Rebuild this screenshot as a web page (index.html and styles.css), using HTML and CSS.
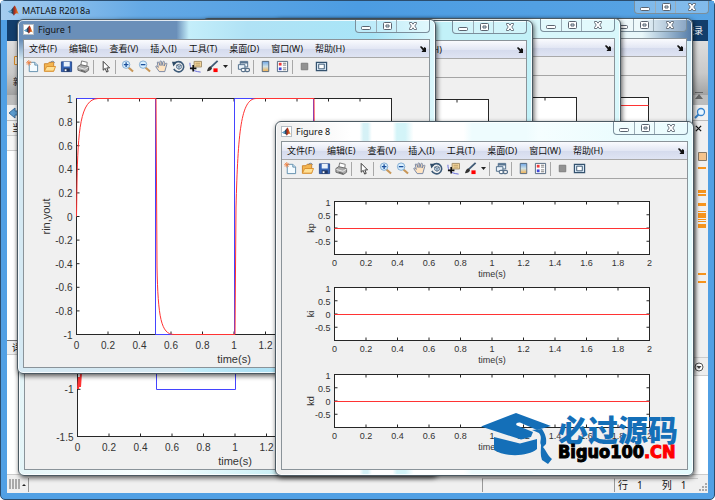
FILE: index.html
```html
<!DOCTYPE html>
<html lang="zh-CN">
<head>
<meta charset="utf-8">
<title>MATLAB R2018a</title>
<link rel="stylesheet" href="styles.css">
</head>
<body>
<svg class="defs" aria-hidden="true">
  <defs>
    <linearGradient id="flame" x1="0" x2="1"><stop offset="0" stop-color="#5aa9d6"/><stop offset=".4" stop-color="#23455e"/><stop offset=".6" stop-color="#b5301c"/><stop offset="1" stop-color="#f3a12b"/></linearGradient>
    <linearGradient id="cbar" x1="0" y1="0" x2="0" y2="1"><stop offset="0" stop-color="#6ea6e8"/><stop offset=".5" stop-color="#cfe0e4"/><stop offset="1" stop-color="#f5b04a"/></linearGradient>
    <symbol id="i-matlab" viewBox="0 0 12 12"><path fill="url(#flame)" d="M0 7.2 3 5.6 7.2.6C8.600 1.200 10.200 7 12 10.400 9.800 8.300 8.400 8.800 6.500 11.600 5.200 9.600 4.300 9 3.200 9Z"/><path fill="#5d9fc9" d="M0 7.200 3 5.600 4.400 6.800 3 8.900Z"/></symbol>
    <symbol id="i-new" viewBox="0 0 14 14"><path d="M3.500 2.500h6l3 3v7h-9z" fill="#f4fbff" stroke="#5f8cab"/><path d="M9.500 2.500v3h3" fill="#cde4f4" stroke="#5f8cab"/><path d="M3 0v6M0 3h6M1 1l4 4M5 1 1 5" stroke="#ee8140" stroke-width=".9"/></symbol>
    <symbol id="i-open" viewBox="0 0 14 14"><path d="M1.500 12V4h4l1-1.500h5V12z" fill="#f3b550" stroke="#cc842b"/><path d="M1.500 12 4 7h9.500L11.500 12z" fill="#ffe094" stroke="#d9902f"/><path d="M8 2.500c2-2 4-1 4.500.5" fill="none" stroke="#65758a"/></symbol>
    <symbol id="i-save" viewBox="0 0 14 14"><path d="M1.500 2h11v10.500h-11z" fill="#3564b5" stroke="#284a8b"/><path d="M4 2h6.500v5H4z" fill="#eaf2fb"/><path d="M4 9h6.500v3.500H4z" fill="#22365f"/><path d="M5 10h2v2H5z" fill="#fff"/></symbol>
    <symbol id="i-print" viewBox="0 0 14 14"><path d="m4 6 1-5 6 1.500L10.500 7z" fill="#fff" stroke="#777"/><path d="m1 7 3-2 8.500 2v4L9 13.500 1 11z" fill="#aaa" stroke="#666"/><path d="m1.500 8 7 2 4-2.500" fill="none" stroke="#eee"/><path d="m4 11 5 1.500" stroke="#555"/></symbol>
    <symbol id="i-arrow" viewBox="0 0 14 14"><path d="M4.500 1.500v9.500L6.700 9l1.500 4 1.700-.7-1.500-3.800h3z" fill="#fff" stroke="#333"/></symbol>
    <symbol id="i-zoomin" viewBox="0 0 14 14"><path d="m8 8 5 4.500" stroke="#c89758" stroke-width="2.200"/><circle cx="5.500" cy="5" r="4" fill="#d8efff" stroke="#7ea9ce"/><path d="M5.500 2.500v5M3 5h5" stroke="#1b4f9b" stroke-width="1.400"/></symbol>
    <symbol id="i-zoomout" viewBox="0 0 14 14"><path d="m8 8 5 4.500" stroke="#c89758" stroke-width="2.200"/><circle cx="5.500" cy="5" r="4" fill="#d8efff" stroke="#7ea9ce"/><path d="M3 5h5" stroke="#1b4f9b" stroke-width="1.400"/></symbol>
    <symbol id="i-pan" viewBox="0 0 14 14"><path d="M4.500 12.500 1 7.500c-.5-1.500 1-1.500 2.500.5L2.500 3c0-1.500 1.300-1.500 1.700 0L5.500 6 5.300 2c.2-1.500 1.700-1.300 1.800 0L7.500 6l1-4c.5-1.200 1.800-.8 1.600.5L9.700 6.500l1.500-2.700c.8-1 1.900-.3 1.500.8L10.500 12.500z" fill="#ffe4c2" stroke="#64779a" stroke-width=".9"/></symbol>
    <symbol id="i-rotate" viewBox="0 0 14 14"><path d="M3 3.500A5.500 5.500 0 1 1 2 9.500" fill="none" stroke="#3c5a78" stroke-width="1.700"/><path d="M0 2h5.500L1.500 7z" fill="#304c68"/><path d="m5 5.500 3-1 2 1.200v3L7.500 10 5 8.500zM5 5.500l2.500 1.200L10 5.700M7.500 6.700V10" fill="#c9dced" stroke="#49627c" stroke-width=".8"/></symbol>
    <symbol id="i-cursor" viewBox="0 0 14 14"><path d="M5.500 1.500h8v6h-8z" fill="#f6d79e" stroke="#9f8a66"/><path d="M7 3.500h5M7 5.500h5" stroke="#b79a66"/><path d="M1 3c0 6 2 9 11.500 10" fill="none" stroke="#5960d8"/><path d="M4.500 5.500v7M1 9h7" stroke="#111" stroke-width="1.700"/></symbol>
    <symbol id="i-brush" viewBox="0 0 14 14"><path d="m5 8 7.500-7" stroke="#405b76" stroke-width="2"/><path d="M1 12c1.500-4 2-5 4-5l1.500 1.800C6 11 3.500 12 1 12z" fill="#333"/><path d="M8 9h4.500v4H8z" fill="#f00"/></symbol>
    <symbol id="i-link" viewBox="0 0 14 14"><path d="M3.500 1.500h8v6h-8z" fill="#eaf2f9" stroke="#4b6987"/><path d="M3.500 3h8" stroke="#4b6987" stroke-width="1.500"/><path d="M1.500 5h7v5h-7z" fill="#eaf2f9" stroke="#4b6987"/><rect x="4.500" y="9" width="5" height="3.500" rx="1.700" fill="#fff" stroke="#59728b" stroke-width="1.200"/><rect x="8.500" y="9" width="5" height="3.500" rx="1.700" fill="none" stroke="#59728b" stroke-width="1.200"/></symbol>
    <symbol id="i-colorbar" viewBox="0 0 14 14"><path d="M3.500 1.500h7v11h-7z" fill="url(#cbar)" stroke="#4f657c"/></symbol>
    <symbol id="i-legend" viewBox="0 0 14 14"><path d="M1.500 1.500h11v11h-11z" fill="#fff" stroke="#4f657c"/><path d="M3 3h3v3H3z" fill="#ef3a3a"/><path d="M3 8h3v3H3z" fill="#4048d8"/><path d="M7.500 3.500H11M7.500 5.500H11M7.500 8.500H11M7.500 10.500H11" stroke="#777"/></symbol>
    <symbol id="i-hide" viewBox="0 0 14 14"><path d="M3.500 3.500h7v7h-7z" fill="#929292" stroke="#7b7b7b"/></symbol>
    <symbol id="i-dock" viewBox="0 0 14 14"><path d="M1.500 2.500h11v9h-11z" fill="#d8e7f5" stroke="#35536f" stroke-width="1.300"/><path d="M4 4.500h6v5H4z" fill="#fff" stroke="#35536f"/></symbol>
    <symbol id="i-min" viewBox="0 0 12 10"><rect x="1.500" y="5.500" width="9" height="3" rx="1" fill="#fff" stroke="#5b6470"/></symbol>
    <symbol id="i-max" viewBox="0 0 12 10"><rect x="2.500" y="1.500" width="8" height="7" rx="1" fill="#fff" stroke="#5b6470"/><path d="M5 4h3v2H5z" fill="#d9edf5" stroke="#5b6470"/></symbol>
    <symbol id="i-close" viewBox="0 0 12 10"><path d="M2.500 1.500h2.300L6 3.200l1.200-1.700h2.300v1L7.800 5l1.700 2.500v1H7.200L6 6.800 4.800 8.500H2.500v-1L4.200 5 2.500 2.500z" fill="#fff" stroke="#5b6470" stroke-width=".9"/></symbol>
  </defs>
</svg>

<main class="shell">
  <header class="shell-title">
    <svg class="app-icon"><use href="#i-matlab"/></svg>
    <h1>MATLAB R2018a</h1>
    <div class="controls shell-controls">
      <button type="button" aria-label="最小化"><svg><use href="#i-min"/></svg></button><button type="button" aria-label="最大化"><svg><use href="#i-max"/></svg></button><button type="button" aria-label="关闭"><svg><use href="#i-close"/></svg></button>
    </div>
  </header>
  <div class="tabs"><a href="#login">登录</a></div>
  <div class="strip">
    <button type="button" class="strip-new"><svg viewBox="0 0 12 12"><path d="M1.500 1.500h9v8h-9z" fill="#f2e6d0" stroke="#d58a27"/></svg><span>新建</span></button>
    <svg class="collapse" viewBox="0 0 10 10"><path d="M1 1.500h8" stroke="#666"/><path d="M5 3 9 8H1z" fill="#666"/></svg>
  </div>
  <div class="address">
    <svg viewBox="0 0 12 12"><path d="M1 6 7 1v3h5v4H7v3z" fill="#5c9ccf" stroke="#386c9c"/></svg>
    <svg viewBox="0 0 12 12"><circle cx="7" cy="5" r="3.500" fill="#e8f6ff" stroke="#3683cd" stroke-width="1.300"/><path d="M4.500 7.500 1 11" stroke="#3683cd" stroke-width="2"/></svg>
  </div>
  <div class="panes">
    <section class="pane-left">
      <h2 class="pane-head">当前文件夹</h2>
      <div class="pane-sub"></div>
      <div class="pane-body"></div>
      <h2 class="pane-head detail-head">详细信息</h2>
      <div class="pane-body detail-body"></div>
    </section>
    <section class="pane-right">
      <div class="pane-head close-head"><button type="button" aria-label="关闭窗格"><svg viewBox="0 0 8 8"><path d="m1 1 6 6M7 1 1 7" stroke="#111" stroke-width="1.400"/></svg></button></div>
      <svg class="marks" viewBox="0 0 10 217" aria-hidden="true">
        <path d="M.5 12.500h8v8h-8z" fill="#f6c48c" stroke="#8a7a66"/>
        <path d="M0 27h8v2H0zM0 50h8v3H0zM0 54h8v2H0zM0 63h8v3H0zM0 71h8v1H0zM0 73h8v5H0zM0 79h8v1H0zM0 81h8v1H0zM0 84h8v4H0zM0 133h8v2H0zM0 141h8v2H0z" fill="#f7941d"/>
      </svg>
      <div class="cmd-head"><svg viewBox="0 0 10 10"><circle cx="5" cy="5" r="4" fill="#fff" stroke="#555"/><path d="M2.500 4h5L5 7z" fill="#444"/></svg></div>
      <div class="pane-body"></div>
    </section>
  </div>
  <footer class="status">
    <svg class="bars" viewBox="0 0 18 12"><path d="M1 1v10M4 1v10M7 1v10M10 1v10" stroke="#aaa" stroke-width="2"/><path d="m13 8 2-2 2 2z" fill="#222"/></svg>
    <span class="cell grow"></span><span class="cell mid"></span>
    <span class="cell pos"><span>行</span><span>1</span><span>列</span><span>1</span></span>
    <svg class="grip" viewBox="0 0 10 10"><path d="M7 1h2v2H7zM4 4h2v2H4zM7 4h2v2H7zM1 7h2v2H1zM4 7h2v2H4zM7 7h2v2H7z" fill="#aaa"/></svg>
  </footer>
</main>

<section class="figure win-c" data-title="Figure 5" data-chart="line"></section>
<section class="figure win-b" data-title="Figure 4" data-chart="empty"></section>
<section class="figure win-a" data-title="Figure 3" data-chart="empty"></section>
<section class="figure win-2" data-title="Figure 2" data-chart="error"></section>
<section class="figure win-1" data-title="Figure 1" data-chart="response"></section>
<section class="figure win-8" data-title="Figure 8" data-chart="gains"></section>

<template id="figure-chrome">
  <header class="fig-title">
    <span class="fig-icon"><svg><use href="#i-matlab"/></svg></span><h2></h2>
    <div class="controls">
      <button type="button" aria-label="最小化"><svg><use href="#i-min"/></svg></button><button type="button" aria-label="最大化"><svg><use href="#i-max"/></svg></button><button type="button" aria-label="关闭"><svg><use href="#i-close"/></svg></button>
    </div>
  </header>
  <div class="client">
    <nav class="menu">
      <button type="button">文件(F)</button><button type="button">编辑(E)</button><button type="button">查看(V)</button><button type="button">插入(I)</button><button type="button">工具(T)</button><button type="button">桌面(D)</button><button type="button">窗口(W)</button><button type="button">帮助(H)</button>
      <svg class="undock" viewBox="0 0 6 6"><path d="m0 1 1-1 3 2.500V1l2 1v4H1.500l1-1.500H3z" fill="#111"/></svg>
    </nav>
    <div class="toolbar"></div>
    <svg class="plot" viewBox="0 0 405 290"></svg>
  </div>
</template>

<aside class="watermark">
  <svg viewBox="0 0 72 52" aria-hidden="true"><g fill="#146fb8"><path d="M0 13.500 35 0 70 13 56 17 39 9.500C36 9 34 11 36 12.500L52 19 50 24 40 26.500Z"/><path d="M13 24 39 30.500 56 26V36C47 44 23 44 13 37Z"/><path d="M51 17 61 16C64 21 66 25 65 31L62 34C66 39 67 43 71 46L67 51 61 47C59 42 60 37 60 32 58 28 62 25 58 20Z"/></g></svg>
  <p><span class="wm-cn">必过源码</span><span class="wm-url">Biguo100<b>.CN</b></span></p>
</aside>
<script src="figures.js"></script>
</body>
</html>
```
FILE: styles.css
```css
* { box-sizing: border-box; }
html, body { height: 100%; margin: 0; }
body { position: relative; min-height: 100vh; overflow: hidden; font-family: "Noto Sans", "Noto Sans CJK SC", sans-serif; font-size: 9px; color: #111; }
h1, h2, p { margin: 0; font-size: inherit; font-weight: 400; }
button { margin: 0; padding: 0; border: 0; background: none; font: inherit; color: inherit; }
.defs { position: absolute; width: 0; height: 0; }

/* Main window */
.shell { display: flex; flex-direction: column; min-height: 100vh; padding: 0 6px 6px; background: #51a0e4; border: 1px solid #2b4d6e; border-radius: 5px; }
.shell-title { display: flex; align-items: center; gap: 3px; height: 19px; margin: 0 -6px; padding: 0 5px 0 7px; background: linear-gradient(90deg, #a5cdf0, #64a9e5 20%, #4c9ce2 50%, #58a4e4); }
.shell-title h1 { font-size: 9px; line-height: 18px; }
.app-icon { width: 11px; height: 11px; }
.controls { display: flex; align-self: flex-start; margin-left: auto; height: 13px; border: 1px solid #7b8f9c; border-top: 0; border-radius: 0 0 4px 4px; background: rgba(255, 255, 255, .25); }
.controls button { display: flex; align-items: center; justify-content: center; width: 20px; }
.controls button + button { border-left: 1px solid #9aabb5; }
.controls button:last-child { width: 33px; }
.controls svg { width: 12px; height: 10px; }
.tabs { display: flex; justify-content: flex-end; align-items: center; height: 21px; padding-right: 5px; background: #123e6c; }
.tabs a { color: #fff; text-decoration: none; }
.strip { display: flex; justify-content: space-between; align-items: flex-end; height: 64px; padding: 0 4px 4px 6px; background: linear-gradient(#dedede, #c9c9c9 50%, #a2a2a2 84%, #bdbdbd 85%); }
.strip-new { display: flex; flex-direction: column; align-items: flex-start; gap: 8px; align-self: center; }
.strip-new svg { width: 12px; height: 12px; }
.collapse { width: 10px; height: 10px; }
.address { display: flex; justify-content: space-between; align-items: center; height: 16px; padding: 0 2px 0 1px; background: #f0f0f0; border-bottom: 1px solid #bbb; }
.address svg { width: 12px; height: 12px; }
.panes { display: flex; justify-content: space-between; flex: 1; background: #f0f0f0; }
.pane-left, .pane-right { display: flex; flex-direction: column; }
.pane-left { flex: 1; }
.pane-right { width: 17px; }
.pane-head { height: 15px; padding-left: 5px; line-height: 14px; background: #f0f0f0; border-bottom: 1px solid #ccc; }
.pane-sub { height: 15px; background: #f6f6f6; border-bottom: 1px solid #ccc; }
.pane-body { flex: 1; background: #fff; }
.detail-head { border-top: 1px solid #777; }
.detail-body { flex: 0 0 119px; }
.close-head { display: flex; align-items: center; padding-left: 4px; border: 0; }
.close-head svg { display: block; width: 7px; height: 7px; }
.marks { width: 10px; height: 217px; margin: 4px 0 0 7px; }
.cmd-head { height: 19px; padding: 4px 3px; background: #eee; border-top: 1px solid #ccc; border-bottom: 1px solid #ccc; }
.cmd-head svg { display: block; width: 10px; height: 10px; }
.status { display: flex; align-items: stretch; height: 19px; padding: 3px 0 1px 2px; background: #f0f0f0; border-top: 1px solid #ccc; font-size: 10px; }
.bars { width: 18px; height: 12px; }
.cell { border-left: 1px solid #999; border-top: 1px solid #ccc; }
.grow { flex: 1; margin-left: 1px; border-top: 0; }
.mid { width: 132px; }
.pos { display: flex; gap: 9px; width: 84px; padding-left: 3px; line-height: 13px; }
.pos span:nth-child(3) { margin-left: 10px; }
.grip { align-self: flex-end; width: 10px; height: 10px; }

/* Figure windows */
.figure { position: absolute; width: 419px; padding: 0 5px 5px; border: 1px solid #4b5962; border-radius: 6px; background: linear-gradient(90deg, #e4f5f8, #f8ffff 30%, #cdf0f6 60%, #f0fcfd); box-shadow: 1px 2px 5px rgba(0, 0, 0, .65), inset 0 0 0 1px rgba(255, 255, 255, .8); }
.win-1 { left: 17px; top: 19px; background: linear-gradient(90deg, rgba(255,255,255,0) 38%, #c4eefa 41%, #b0e2f5 55%, #a8e5f7 85%, #dcf8fc), linear-gradient(#6a8fb9 0 20px, #d5e9f3 40px); }
.win-2 { left: 18px; top: 121px; }
.win-a { left: 114px; top: 20px; background: #c2f1f8; }
.win-b { left: 202px; top: 18px; background: #d8f7fb; }
.win-c { left: 274px; top: 18px; background: linear-gradient(90deg, #e8f7fa 88%, #537ba8) 0 0 / 100% 22px no-repeat, #d3edf7; }
.win-8 { left: 275px; top: 121px; background: linear-gradient(90deg, #eee, #fff 18%, #fff 20%, #d5f1f6 21% 22%, #fff 23% 28%, #d3f4f8 29% 31%, #fff 33% 45%, #eefcfe 47% 60%, #f5feff 63%, #e2fafd); }
.fig-title { display: flex; align-items: center; gap: 4px; height: 19px; }
.fig-title h2 { line-height: 18px; }
.fig-icon { display: flex; align-items: center; justify-content: center; width: 11px; height: 11px; background: #fff; border: 1px solid #b5bec5; }
.fig-icon svg { width: 9px; height: 9px; }
.client { border: 1px solid #8a9399; background: #f0f0f0; }
.menu { display: flex; align-items: center; gap: 12px; height: 18px; padding: 0 3px 0 5px; background: linear-gradient(#fafbfe, #e3e7f4 50%, #d5dbed 55%, #dfe4f3); border-bottom: 1px solid #a9a9a9; white-space: nowrap; }
.undock { width: 6px; height: 6px; margin-left: auto; }
.toolbar { display: flex; align-items: flex-start; gap: 1px; height: 19px; border-bottom: 1px solid #a5a5a5; }
.toolbar button { display: flex; align-items: center; justify-content: center; width: 16px; height: 17px; }
.toolbar button svg { width: 13px; height: 13px; }
.toolbar .drop { width: 8px; }
.toolbar .drop svg { width: 5px; height: 3px; }
.sep { width: 1px; height: 14px; margin: 2px 2px 0 1px; background: #a8a8a8; }
.plot { display: block; width: 100%; font-family: "Liberation Sans", Arial, sans-serif; fill: #333; }
.box { fill: #fff; stroke: #262626; }
.tick { fill: none; stroke: #262626; }
.red { fill: none; stroke: #f33; }
.blue { fill: none; stroke: #44f; }

/* Logo overlay */
.watermark { position: absolute; left: 481px; top: 413px; display: flex; align-items: flex-start; gap: 5px; }
.watermark > svg { width: 72px; height: 52px; }
.watermark p { display: flex; flex-direction: column; }
.wm-cn { color: #146fb8; font: 900 30px/30px "Noto Sans CJK SC", sans-serif; }
.wm-url { color: #000; font: 700 18px/18px "DejaVu Sans Condensed", "DejaVu Sans", sans-serif; -webkit-text-stroke: 1px #000; }
.wm-url b { color: #f00; font-weight: inherit; -webkit-text-stroke: 1px #f00; }
```
FILE: figures.js
```js
const tools = ['new', 'open', 'save', 'print', '|', 'arrow', '|', 'zoomin', 'zoomout', 'pan', 'rotate', 'cursor', 'brush', 'v', '|', 'link', '|', 'colorbar', 'legend', '|', 'hide', 'dock'];

const toolbar = tools.map(t => {
  if (t === '|') return '<span class="sep"></span>';
  if (t === 'v') return '<button type="button" class="drop" aria-label="brush colour"><svg viewBox="0 0 5 3"><path d="M0 0h5L2.500 3z" fill="#222"/></svg></button>';
  return `<button type="button" aria-label="${t}"><svg><use href="#i-${t}"/></svg></button>`;
}).join('');

const text = (x, y, size, anchor, value) => `<text x="${x}" y="${y}" font-size="${size}" text-anchor="${anchor}">${value}</text>`;

// One set of axes: a framed box, ticks on all four sides, and labels.
function axes({ x, y, w, h, rows, labels, size, name, nameX, nameSize, xGap, titleGap }) {
  let out = `<rect class="box" x="${x}" y="${y}" width="${w}" height="${h}"/>`;
  let ticks = '';
  for (let i = 0; i <= 10; i++) {
    const tx = x + w * i / 10;
    ticks += `M${tx} ${y}v3M${tx} ${y + h}v-3`;
    if (labels.length) out += text(tx, y + h + xGap, size, 'middle', String(i * 2 / 10));
  }
  labels.forEach((label, i) => {
    const ty = y + h * i / rows;
    ticks += `M${x} ${ty}h3M${x + w} ${ty}h-3`;
    out += text(x - 4, ty + Math.round(size * 0.4), size, 'end', label);
  });
  out += `<path class="tick" d="${ticks}"/>`;
  if (labels.length) out += text(x + w / 2, y + h + titleGap, nameSize, 'middle', 'time(s)');
  if (name) out += `<text transform="translate(${nameX} ${y + h / 2}) rotate(-90)" font-size="${nameSize}" text-anchor="middle">${name}</text>`;
  return out;
}

const large = (rows, labels, name) => axes({ x: 52.5, y: 21.5, w: 315, h: 236, rows, labels, size: 10, name, nameX: 26, nameSize: 11, xGap: 14, titleGap: 28 });
const small = (y, name) => axes({ x: 52.5, y, w: 315, h: 53, rows: 4, labels: ['1', '0.5', '0', '-0.5'], size: 9, name, nameX: 32, nameSize: 9, xGap: 11, titleGap: 22 });

const charts = {
  response: () => large(10, ['1', '0.8', '0.6', '0.4', '0.2', '0', '-0.2', '-0.4', '-0.6', '-0.8', '-1'], 'rin,yout')
    + '<path class="blue" d="M52.5 21.500H131.500V257.500H210.500V21.500H289.500V257.500"/>'
    + '<path class="red" d="M52.5 139.500 53 105C54 55 56 22 74 21.500H132L133 190C134 240 137 257.500 150 257.500H211L212 130C214 55 217 22 232 21.500H290L291 190"/>',
  error: () => large(5, ['1', '0.5', '0', '-0.5', '-1', '-1.5'], '')
    + '<path class="blue" d="M131.500 21.500V210.500H210.500V21.500"/><path class="red" stroke-width="2" d="M53 210 54 198 55 208 56 194 61 182V160"/>',
  empty: () => large(10, [], ''),
  line: () => large(10, [], '') + '<path class="red" d="M52.5 29.500H367.500"/>',
  gains: () => [[22.5, 'kp'], [108.5, 'ki'], [195.5, 'kd']].map(([y, name]) => small(y, name) + `<path class="red" d="M52.5 ${y + 27}h315"/>`).join('')
};

document.querySelectorAll('.figure').forEach(figure => {
  figure.append(document.getElementById('figure-chrome').content.cloneNode(true));
  figure.querySelector('h2').textContent = figure.dataset.title;
  figure.querySelector('.toolbar').innerHTML = toolbar;
  figure.querySelector('.plot').innerHTML = charts[figure.dataset.chart]();
});
```
